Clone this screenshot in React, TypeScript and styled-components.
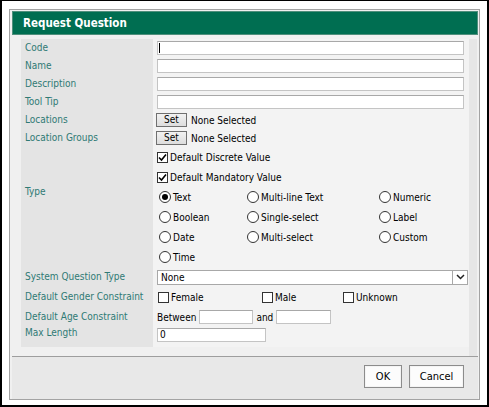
import React from 'react';
import styled, { createGlobalStyle } from 'styled-components';

const GlobalStyle = createGlobalStyle`
  html, body {
    margin: 0;
    padding: 0;
    background: #ffffff;
  }
  body {
    font-family: 'DejaVu Sans Condensed', 'DejaVu Sans', Verdana, sans-serif;
    font-size: 10px;
  }
`;

const LABEL_COLOR = '#2f7a74';

const Frame = styled.div`
  width: 489px;
  height: 407px;
  box-sizing: border-box;
  border-style: solid;
  border-color: #000;
  border-width: 1px 2px 2px 2px;
  background: #fff;
  padding: 8px 0 0 7px;
`;

const Dialog = styled.div`
  width: 471px;
  height: 391px;
  box-sizing: border-box;
  border: 1px solid #a3a3a3;
  background: #f0f0f0;
  padding: 1px 1px 0 2px;
  display: flex;
  flex-direction: column;
`;

const Header = styled.div`
  height: 24px;
  box-sizing: border-box;
  background: #006e51;
  border: 1px solid #4f8f7c;
  color: #fff;
  font-weight: bold;
  font-size: 11.5px;
  display: flex;
  align-items: center;
  padding-left: 10px;
`;

const Body = styled.div`
  display: flex;
  align-items: flex-start;
  padding: 4px 0 0 9px;
  height: 321px;
  box-sizing: border-box;
  background: #f0f0f0;
`;

const Form = styled.div`
  display: grid;
  grid-template-columns: 132px 316px;
  align-content: start;
  padding-bottom: 4px;
  background: linear-gradient(to right, #e4e4e4 0, #e4e4e4 132px, #f3f3f3 132px);
`;

const RightStrip = styled.div`
  width: 8px;
  align-self: stretch;
  background: #e6e6e6;
`;

const Label = styled.div<{ $h?: number; $top?: number }>`
  color: ${LABEL_COLOR};
  padding-left: 4px;
  height: ${(p) => p.$h ?? 18}px;
  box-sizing: border-box;
  padding-top: ${(p) => p.$top ?? 3}px;
  white-space: nowrap;
`;

const Value = styled.div<{ $h?: number }>`
  height: ${(p) => p.$h ?? 18}px;
  display: flex;
  align-items: center;
  padding-left: 4px;
  color: #000;
  white-space: nowrap;
`;

const TextInput = styled.input<{ $w?: number }>`
  box-sizing: border-box;
  width: ${(p) => p.$w ?? 307}px;
  height: 14px;
  border: 1px solid #c4c4c4;
  border-top-color: #a8a8a8;
  background: #fff;
  padding: 0 2px;
  margin: 0;
  font: inherit;
  font-size: 10px;
  outline: none;
`;

const CaretWrap = styled.div`
  position: relative;
  display: flex;
`;

const Caret = styled.span`
  position: absolute;
  left: 2px;
  top: 2px;
  width: 1px;
  height: 10px;
  background: #000;
`;

const SetButton = styled.button`
  box-sizing: border-box;
  width: 31px;
  height: 14px;
  margin: 0 4px 0 -1px;
  padding: 0;
  border: 1px solid #707070;
  background: linear-gradient(#f2f2f2, #dddddd);
  font: inherit;
  font-size: 10px;
  color: #000;
  line-height: 12px;
`;

const CheckRow = styled.label<{ $h?: number }>`
  display: flex;
  align-items: center;
  height: ${(p) => p.$h ?? 20}px;
  gap: 2px;
  white-space: nowrap;
`;

const Box = styled.span`
  width: 11px;
  height: 11px;
  box-sizing: border-box;
  border: 1px solid #333;
  background: #fff;
  display: inline-flex;
  align-items: center;
  justify-content: center;
  flex: none;
`;

const Check = ({ checked }: { checked?: boolean }) => (
  <Box>
    {checked && (
      <svg width="9" height="9" viewBox="0 0 9 9">
        <path d="M1 4.5 L3.5 7 L8 1.5" stroke="#000" strokeWidth="1.6" fill="none" />
      </svg>
    )}
  </Box>
);

const Circle = styled.span`
  width: 12px;
  height: 12px;
  box-sizing: border-box;
  border: 1px solid #333;
  border-radius: 50%;
  background: #fff;
  display: inline-flex;
  align-items: center;
  justify-content: center;
  flex: none;
`;

const Dot = styled.span`
  width: 6px;
  height: 6px;
  border-radius: 50%;
  background: #000;
`;

const RadioGrid = styled.div`
  display: grid;
  grid-template-columns: 88px 132px 80px;
  grid-auto-rows: 20px;
  padding-left: 2px;
`;

const Radio = ({ label, checked }: { label: string; checked?: boolean }) => (
  <CheckRow $h={20}>
    <Circle>{checked && <Dot />}</Circle>
    <span>{label}</span>
  </CheckRow>
);

const TypeCell = styled.div`
  display: flex;
  flex-direction: column;
  padding-left: 4px;
`;

const Select = styled.div`
  box-sizing: border-box;
  width: 311px;
  height: 15px;
  border: 1px solid #a8a8a8;
  background: #fff;
  display: flex;
  align-items: center;
  justify-content: space-between;
  padding-left: 3px;
`;

const SelectArrow = styled.span`
  width: 15px;
  height: 13px;
  box-sizing: border-box;
  border-left: 1px solid #a8a8a8;
  display: flex;
  align-items: center;
  justify-content: center;
`;

const GenderRow = styled.div`
  display: grid;
  grid-template-columns: 104px 81px auto;
  padding-left: 1px;
`;

const AgeRow = styled.div`
  display: flex;
  align-items: center;
  gap: 3px;
`;

const Footer = styled.div`
  flex: 1;
  border-top: 1px solid #9e9e9e;
  background: #e8e8e8;
  display: flex;
  justify-content: flex-end;
  align-items: flex-start;
  gap: 7px;
  padding: 8px 14px 0 0;
`;

const DialogButton = styled.button<{ $w: number }>`
  box-sizing: border-box;
  width: ${(p) => p.$w}px;
  height: 23px;
  border: 1px solid #8c8c8c;
  background: #fcfcfc;
  box-shadow: inset 0 0 0 1px #f4f4f4;
  font: inherit;
  font-size: 11px;
  color: #000;
  padding: 0;
`;

export default function App() {
  return (
    <>
      <GlobalStyle />
      <Frame>
        <Dialog>
          <Header>Request Question</Header>
          <Body>
            <Form>
              <Label>Code</Label>
              <Value>
                <CaretWrap>
                  <TextInput />
                  <Caret />
                </CaretWrap>
              </Value>

              <Label>Name</Label>
              <Value>
                <TextInput />
              </Value>

              <Label>Description</Label>
              <Value>
                <TextInput />
              </Value>

              <Label>Tool Tip</Label>
              <Value>
                <TextInput />
              </Value>

              <Label>Locations</Label>
              <Value>
                <SetButton>Set</SetButton>
                None Selected
              </Value>

              <Label>Location Groups</Label>
              <Value>
                <SetButton>Set</SetButton>
                None Selected
              </Value>

              <Label $h={121} $top={39}>
                Type
              </Label>
              <TypeCell>
                <CheckRow>
                  <Check checked />
                  <span>Default Discrete Value</span>
                </CheckRow>
                <CheckRow>
                  <Check checked />
                  <span>Default Mandatory Value</span>
                </CheckRow>
                <RadioGrid>
                  <Radio label="Text" checked />
                  <Radio label="Multi-line Text" />
                  <Radio label="Numeric" />
                  <Radio label="Boolean" />
                  <Radio label="Single-select" />
                  <Radio label="Label" />
                  <Radio label="Date" />
                  <Radio label="Multi-select" />
                  <Radio label="Custom" />
                  <Radio label="Time" />
                </RadioGrid>
              </TypeCell>

              <Label>System Question Type</Label>
              <Value>
                <Select>
                  <span>None</span>
                  <SelectArrow>
                    <svg width="9" height="6" viewBox="0 0 9 6">
                      <path d="M1 1 L4.5 4.5 L8 1" stroke="#222" strokeWidth="1.5" fill="none" />
                    </svg>
                  </SelectArrow>
                </Select>
              </Value>

              <Label $h={22} $top={5}>
                Default Gender Constraint
              </Label>
              <Value $h={22}>
                <GenderRow>
                  <CheckRow $h={22}>
                    <Check />
                    <span>Female</span>
                  </CheckRow>
                  <CheckRow $h={22}>
                    <Check />
                    <span>Male</span>
                  </CheckRow>
                  <CheckRow $h={22}>
                    <Check />
                    <span>Unknown</span>
                  </CheckRow>
                </GenderRow>
              </Value>

              <Label $h={18} $top={3}>
                Default Age Constraint
              </Label>
              <Value $h={18}>
                <AgeRow>
                  <span>Between</span>
                  <TextInput $w={54} />
                  <span>and</span>
                  <TextInput $w={55} />
                </AgeRow>
              </Value>

              <Label $h={17} $top={1}>
                Max Length
              </Label>
              <Value $h={17}>
                <TextInput $w={109} defaultValue="0" />
              </Value>
            </Form>
            <RightStrip />
          </Body>
          <Footer>
            <DialogButton $w={38}>OK</DialogButton>
            <DialogButton $w={55}>Cancel</DialogButton>
          </Footer>
        </Dialog>
      </Frame>
    </>
  );
}
